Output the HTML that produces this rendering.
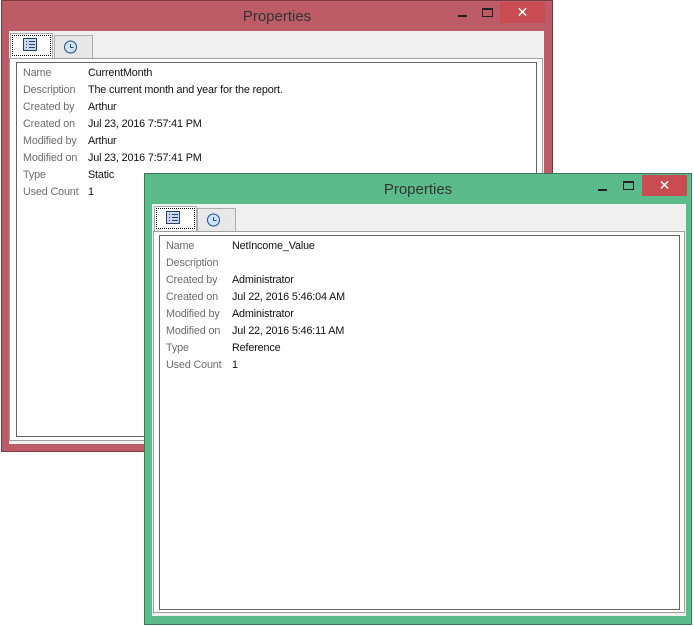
<!DOCTYPE html>
<html><head><style>
*{margin:0;padding:0;box-sizing:border-box}
body{width:694px;height:626px;background:#fff;position:relative;overflow:hidden;font-family:"Liberation Sans",sans-serif}
.win{position:absolute;border:1px solid rgba(0,0,0,.35)}
.title{position:absolute;left:0;right:0;top:6px;text-align:center;font-size:15px;color:#333}
.client{position:absolute;background:#f0f0f0}
.close{position:absolute;color:#fff;font-size:14px;text-align:center;line-height:20px}
.min{position:absolute;width:9px;height:2px;background:#222}
.max{position:absolute;width:11px;height:9px;border:1px solid #222;border-top-width:2px}
.tab{position:absolute;border:1px solid #adadad;border-bottom:none;background:#e8e8e8}
.tab.sel{background:#fff;outline:1px dotted #000;outline-offset:-3px}
.panel{position:absolute;background:#fff;border:1px solid #a0a0a0}
.inner{position:absolute;border:1px solid #646464;background:#fff}
.row{position:absolute;font-size:10.8px;letter-spacing:-0.15px;white-space:nowrap}
.lab{color:#6d6d6d}
.val{color:#111}
</style></head><body>

<div class="win" style="left:1px;top:0;width:552px;height:452px;background:#bd5b66">
  <div class="title" style="top:7px">Properties</div>
  <div class="min" style="left:456px;top:14px"></div>
  <div class="max" style="left:480px;top:7px"></div>
  <div class="close" style="left:498px;top:1px;width:45px;height:21px;background:#c94c52">✕</div>
  <div class="client" style="left:7px;top:30px;width:535px;height:413px"></div>
</div>
<div class="tab sel" style="left:10px;top:33px;width:43px;height:25px"></div>
<div class="tab" style="left:54px;top:35px;width:39px;height:23px"></div>
<div class="panel" style="left:9px;top:58px;width:534px;height:383px"></div>
<div class="inner" style="left:16px;top:62px;width:521px;height:375px"></div>

<div class="win" style="left:144px;top:173px;width:548px;height:452px;background:#5cbb8b">
  <div class="title" style="top:7px">Properties</div>
  <div class="min" style="left:453px;top:15px"></div>
  <div class="max" style="left:478px;top:7px"></div>
  <div class="close" style="left:497px;top:1px;width:45px;height:21px;background:#c94c52">✕</div>
  <div class="client" style="left:7px;top:30px;width:534px;height:412px"></div>
</div>
<div class="tab sel" style="left:154px;top:206px;width:43px;height:25px"></div>
<div class="tab" style="left:197px;top:208px;width:39px;height:23px"></div>
<div class="panel" style="left:153px;top:231px;width:532px;height:382px"></div>
<div class="inner" style="left:159px;top:235px;width:521px;height:375px"></div>

<svg style="position:absolute;left:0;top:0" width="694" height="626">
 <g>
  <rect x="23.5" y="38.5" width="13" height="12" fill="#c8d8f0" stroke="#2a3f6a"/>
  <path d="M26 41.5h1M29 41.5h6M26 44.5h1M29 44.5h6M26 47.5h1M29 47.5h6" stroke="#2a3f6a"/>
  <circle cx="70.5" cy="47" r="6" fill="#cfe3f7" stroke="#1f4e8a"/>
  <path d="M70.5 44v3.5h3" stroke="#1f4e8a" fill="none"/>
 </g>
 <g transform="translate(143,173)">
  <rect x="23.5" y="38.5" width="13" height="12" fill="#c8d8f0" stroke="#2a3f6a"/>
  <path d="M26 41.5h1M29 41.5h6M26 44.5h1M29 44.5h6M26 47.5h1M29 47.5h6" stroke="#2a3f6a"/>
  <circle cx="70.5" cy="47" r="6" fill="#cfe3f7" stroke="#1f4e8a"/>
  <path d="M70.5 44v3.5h3" stroke="#1f4e8a" fill="none"/>
 </g>
</svg>

<div class="row lab" style="left:23px;top:67px">Name</div><div class="row val" style="left:88px;top:67px">CurrentMonth</div>
<div class="row lab" style="left:23px;top:84px">Description</div><div class="row val" style="left:88px;top:84px">The current month and year for the report.</div>
<div class="row lab" style="left:23px;top:101px">Created by</div><div class="row val" style="left:88px;top:101px">Arthur</div>
<div class="row lab" style="left:23px;top:118px">Created on</div><div class="row val" style="left:88px;top:118px">Jul 23, 2016 7:57:41 PM</div>
<div class="row lab" style="left:23px;top:135px">Modified by</div><div class="row val" style="left:88px;top:135px">Arthur</div>
<div class="row lab" style="left:23px;top:152px">Modified on</div><div class="row val" style="left:88px;top:152px">Jul 23, 2016 7:57:41 PM</div>
<div class="row lab" style="left:23px;top:169px">Type</div><div class="row val" style="left:88px;top:169px">Static</div>
<div class="row lab" style="left:23px;top:186px">Used Count</div><div class="row val" style="left:88px;top:186px">1</div>

<div class="row lab" style="left:166px;top:240px">Name</div><div class="row val" style="left:232px;top:240px">NetIncome_Value</div>
<div class="row lab" style="left:166px;top:257px">Description</div>
<div class="row lab" style="left:166px;top:274px">Created by</div><div class="row val" style="left:232px;top:274px">Administrator</div>
<div class="row lab" style="left:166px;top:291px">Created on</div><div class="row val" style="left:232px;top:291px">Jul 22, 2016 5:46:04 AM</div>
<div class="row lab" style="left:166px;top:308px">Modified by</div><div class="row val" style="left:232px;top:308px">Administrator</div>
<div class="row lab" style="left:166px;top:325px">Modified on</div><div class="row val" style="left:232px;top:325px">Jul 22, 2016 5:46:11 AM</div>
<div class="row lab" style="left:166px;top:342px">Type</div><div class="row val" style="left:232px;top:342px">Reference</div>
<div class="row lab" style="left:166px;top:359px">Used Count</div><div class="row val" style="left:232px;top:359px">1</div>
</body></html>
